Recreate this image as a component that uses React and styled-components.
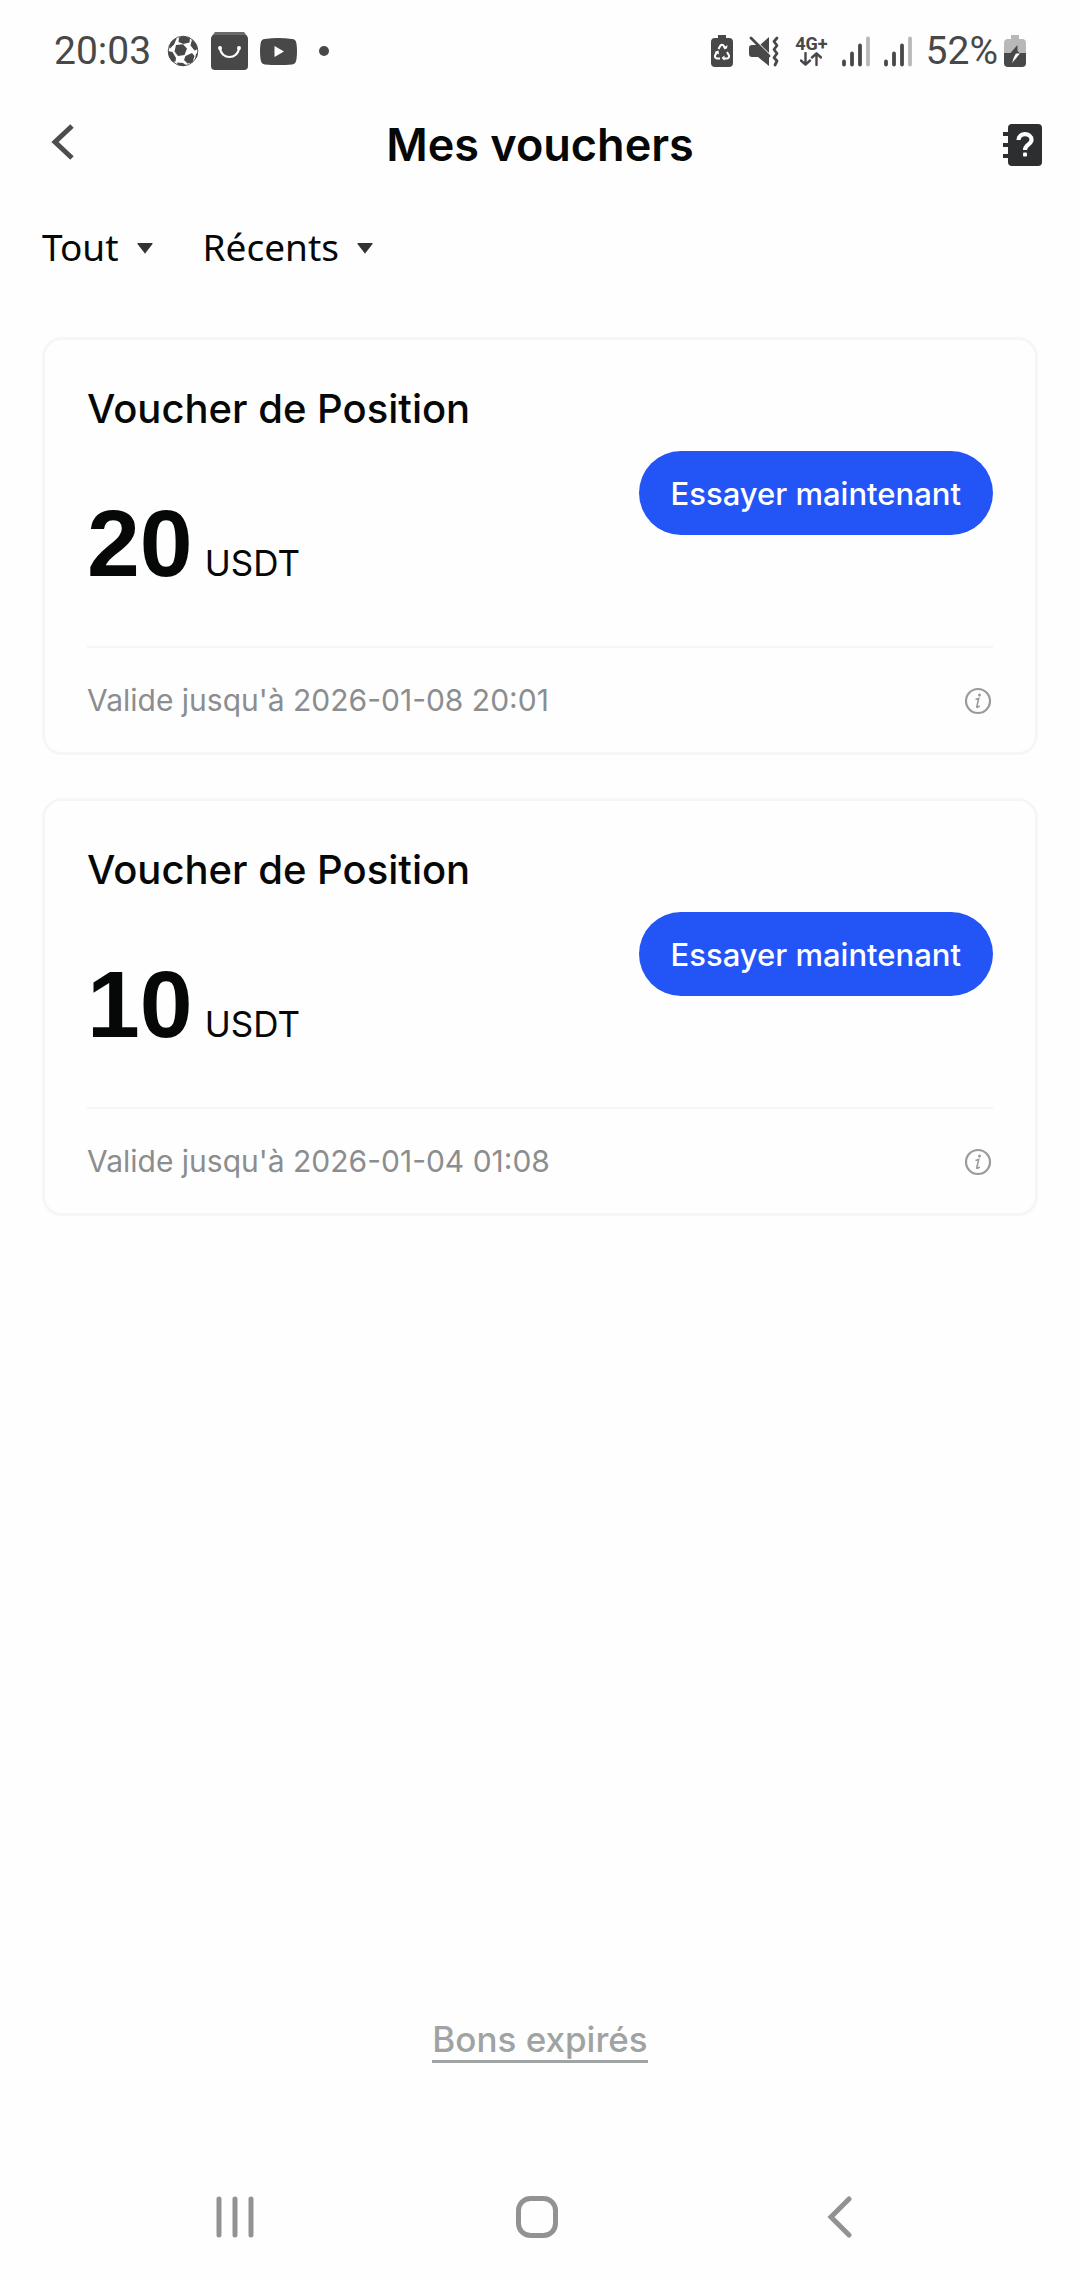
import React, { useState } from 'react'
import styled, { createGlobalStyle } from 'styled-components'

const GlobalStyle = createGlobalStyle`
  * {
    box-sizing: border-box;
  }

  body {
    margin: 0;
    background: #fefefe;
    color: #060807;
    font-family: Inter, "Liberation Sans", sans-serif;
  }

  button {
    margin: 0;
    padding: 0;
    border: none;
    background: none;
    font-family: inherit;
    cursor: pointer;
  }

  svg {
    display: block;
    flex: none;
  }
`

const Page = styled.div`
  display: flex;
  flex-direction: column;
  min-height: 100vh;
`

const StatusBar = styled.div`
  display: flex;
  justify-content: space-between;
  align-items: center;
  height: 102px;
  padding: 0 54px;
  color: #484848;
  font-family: Roboto, sans-serif;
  font-size: 39px;
`

const StatusGroup = styled.div`
  display: flex;
  align-items: center;
  gap: ${(props) => props.$gap}px;
`

const Network = styled.div`
  display: flex;
  flex-direction: column;
  align-items: center;
  font-size: 18px;
  line-height: 16px;
  font-weight: 700;
`

const Header = styled.header`
  display: grid;
  grid-template-columns: 1fr auto 1fr;
  align-items: center;
  height: 86px;
  padding: 0 38px;
`

const HeaderButton = styled.button`
  justify-self: ${(props) => props.$side};
`

const PageTitle = styled.h1`
  margin: 0;
  font-size: 45px;
  line-height: 60px;
  font-weight: 600;
`

const Filters = styled.div`
  display: flex;
  gap: 50px;
  height: 149px;
  padding: 30px 42px 0;
`

const FilterButton = styled.button`
  display: flex;
  align-items: center;
  gap: 18px;
  height: 56px;
  color: inherit;
  font-family: "Noto Sans", sans-serif;
  font-size: 37px;
`

const VoucherList = styled.ul`
  display: flex;
  flex-direction: column;
  gap: 43px;
  margin: 0;
  padding: 0 42px;
  list-style: none;
`

const VoucherCard = styled.li`
  padding: 0 42px;
  border: 3px solid #f6f6f6;
  border-radius: 20px;
`

const VoucherBody = styled.div`
  display: flex;
  justify-content: space-between;
  align-items: center;
  height: 308px;
  border-bottom: 2px solid #f5f5f5;
`

const VoucherName = styled.h2`
  margin: 0;
  font-size: 40px;
  line-height: 48px;
  font-weight: 500;
`

const Amount = styled.p`
  display: flex;
  align-items: baseline;
  gap: 12px;
  margin: 72px 0 0;
  font-size: 35px;
  line-height: 76px;
`

const AmountValue = styled.strong`
  font-family: "Liberation Sans", sans-serif;
  font-size: 95px;
`

const TryButton = styled.button`
  height: 84px;
  padding: 0 32px;
  border-radius: 42px;
  background: #2354f6;
  color: #fff;
  font-size: 31px;
  font-weight: 500;
`

const VoucherFooter = styled.div`
  display: flex;
  justify-content: space-between;
  align-items: center;
  height: 104px;
  color: #8b8d8e;
  font-size: 30px;
`

const Bottom = styled.footer`
  display: flex;
  flex-direction: column;
  align-items: center;
  margin-top: auto;
`

const ExpiredLink = styled.a`
  border-bottom: 3px solid #a0a3a3;
  color: #a0a3a3;
  font-size: 35px;
  line-height: 42px;
  font-weight: 500;
  text-decoration: none;
`

const NavBar = styled.nav`
  display: flex;
  justify-content: space-between;
  align-items: center;
  width: 100%;
  height: 126px;
  margin-top: 91px;
  padding: 0 222px 0 216px;
`

const IconSoccer = () => (
  <svg width="32" height="32" viewBox="0 0 32 32">
    <circle cx="16" cy="16" r="14.800" fill="#fefefe" stroke="#484848" strokeWidth=".9" />
    <g fill="#484848">
      <path d="M9 10l7-.8 4 4.300-2.500 6.500-6.500 1-3.500-4.500z" />
      <path d="M12 2.500l5-1.500 6 2-.5 4.500-6 1.500-5-2z" />
      <path d="M25 4.500l4 4 2 5.500-3.500 1.500-4-5z" />
      <path d="M18.500 21l6.500-3 2.500 3-2 6.500-5 1-3.500-3.500z" />
      <path d="M1 16l4.500 1 3.500 6-.5 3.500-3 .5C2.500 24 1 20 1 16z" />
      <path d="M2 12l2-5 5-4 .5 1-2.500 5.500-4 4z" />
      <path d="M10 27.500l6 .5 3.500 2.500Q15 32 10.500 29.800z" />
      <path d="M29 19l2-1q-.5 4-3 6.500z" />
    </g>
  </svg>
)

const IconBag = () => (
  <svg width="37" height="38" viewBox="0 0 37 38">
    <path d="M4 0h29l3 4H1z" fill="#6a6a6a" />
    <rect y="3" width="37" height="35" rx="4" fill="#484848" />
    <path d="M9 16c1 12 18 12 19 0" fill="none" stroke="#fff" strokeWidth="2.200" />
    <circle cx="9" cy="16" r="2" fill="#fff" />
    <circle cx="28" cy="16" r="2" fill="#fff" />
  </svg>
)

const IconYoutube = () => (
  <svg width="37" height="27" viewBox="0 0 37 27">
    <path d="M5 1Q18 -1 32 1Q36 1 36.500 6Q37.500 13 36.500 21Q36 26 32 26.500Q18 27.500 5 26.500Q1 26 .5 21Q-.5 13 .5 6Q1 1 5 1z" fill="#484848" />
    <path d="M14.500 8l9.500 5.500-9.500 5.500z" fill="#fff" />
  </svg>
)

const IconDot = () => (
  <svg width="30" height="10" viewBox="0 0 30 10">
    <circle cx="15" cy="5" r="5" fill="#484848" />
  </svg>
)

const IconPowerSaving = () => (
  <svg width="22" height="33" viewBox="0 0 22 33">
    <path d="M7 0h8v3h3q4 0 4 4v21q0 4-4 4H4q-4 0-4-4V7q0-4 4-4h3z" fill="#484848" />
    <g fill="none" stroke="#fff" strokeWidth="2" strokeLinejoin="round">
      <path d="M7.500 14l2-3.500q1.500-1.500 3 0l2 3.500" />
      <path d="M16 17l2 3.500q.5 2.500-2 3h-4" />
      <path d="M6 17l-2 3.500q-.5 2.500 2 3h3" />
    </g>
    <path d="M12 13l4 .5.500-3.500zM13.500 20.500v5l-3-2.500zM3.500 17l4-1.500.5 4z" fill="#fff" />
  </svg>
)

const IconMuteVibrate = () => (
  <svg width="30" height="31" viewBox="0 0 30 31">
    <path d="M0 12q0-3 3-3h5l12 12v9L9 21H3q-3 0-3-3zM20 1v16l-8.500-8.500z" fill="#484848" />
    <g fill="none" stroke="#484848" strokeWidth="2.800" strokeLinecap="round" strokeLinejoin="round">
      <path d="M2 2l18 18" />
      <path d="M28 2l-3 3.500 3 4-3 4 3 4-3 4 3 3.500-2 4" />
    </g>
  </svg>
)

const IconArrows = () => (
  <svg width="22" height="14" viewBox="0 0 22 14" fill="none" stroke="#484848" strokeWidth="2.400" strokeLinecap="round" strokeLinejoin="round">
    <path d="M5.500 1v11.500M1 8.500l4.500 4.200L10 8.500M16.500 13V1.500M12 5.500l4.500-4.200L21 5.500" />
  </svg>
)

const IconSignal = () => (
  <svg width="28" height="31" viewBox="0 0 28 31" strokeWidth="3.800" strokeLinecap="round">
    <path d="M2 25.500v3M10 17.500v11M18 9.500v19" stroke="#484848" />
    <path d="M26 2.500v26" stroke="#b8b8b8" />
  </svg>
)

const IconCharging = () => (
  <svg width="22" height="32" viewBox="0 0 22 32">
    <path d="M7 0h8v4h3q4 0 4 4v10H0V8q0-4 4-4h3z" fill="#b8b8b8" />
    <path d="M0 18h22v10q0 4-4 4H4q-4 0-4-4z" fill="#484848" />
    <path d="M13.500 10L5.500 19h6l2-1h2l-2-2z" fill="#484848" />
    <path d="M12 18.500h4L8 28l2-6z" fill="#fff" />
  </svg>
)

const IconBack = () => (
  <svg width="38" height="42" viewBox="0 0 38 42" fill="none" stroke="#4d4d4f" strokeWidth="5">
    <path d="M34 2L17 18l17 16" />
  </svg>
)

const IconHelp = () => (
  <svg width="39" height="42" viewBox="0 0 39 42">
    <path d="M0 8h8v4H0zM0 19h8v4H0zM0 30h8v4H0z" fill="#2d2e30" />
    <rect x="5" width="34" height="42" rx="4" fill="#2d2e30" />
    <path d="M15.500 16c0-8 13-7.500 13 0 0 4.500-6.500 4.500-6.500 10" fill="none" stroke="#fff" strokeWidth="4.200" />
    <rect x="20" y="28.500" width="4" height="4" rx="1" fill="#fff" />
  </svg>
)

const IconCaret = () => (
  <svg width="16" height="16" viewBox="0 0 16 16">
    <path d="M1 5h14q1 0 .5 1L8.500 15q-.5 1-1 0L.5 6Q0 5 1 5z" fill="#333" />
  </svg>
)

const IconInfo = () => (
  <svg width="30" height="30" viewBox="0 -1 30 30">
    <circle cx="15" cy="15" r="12" fill="none" stroke="#999b9b" strokeWidth="2.200" />
    <circle cx="16.500" cy="9" r="1.500" fill="#999b9b" />
    <path d="M12.500 13.500l3.200-1-2 8.500q0 1 3-1" fill="none" stroke="#999b9b" strokeWidth="1.600" />
  </svg>
)

const IconRecents = () => (
  <svg width="38" height="42" viewBox="0 0 38 42" stroke="#929292" strokeWidth="5" strokeLinecap="round">
    <path d="M3 3v36M19 3v36M35 3v36" />
  </svg>
)

const IconHome = () => (
  <svg width="42" height="42" viewBox="0 0 42 42">
    <rect x="2.500" y="2.500" width="37" height="37" rx="12" fill="none" stroke="#929292" strokeWidth="5" />
  </svg>
)

const IconNavBack = () => (
  <svg width="38" height="42" viewBox="0 0 38 42" fill="none" stroke="#929292" strokeWidth="5" strokeLinecap="round">
    <path d="M29 3L11 21l18 18" />
  </svg>
)

const vouchers = [
  { id: 1, name: 'Voucher de Position', amount: 20, currency: 'USDT', validUntil: '2026-01-08 20:01' },
  { id: 2, name: 'Voucher de Position', amount: 10, currency: 'USDT', validUntil: '2026-01-04 01:08' },
]

const Voucher = ({ voucher }) => (
  <VoucherCard>
    <VoucherBody>
      <div>
        <VoucherName>{voucher.name}</VoucherName>
        <Amount>
          <AmountValue>{voucher.amount}</AmountValue>
          {voucher.currency}
        </Amount>
      </div>
      <TryButton type="button">Essayer maintenant</TryButton>
    </VoucherBody>
    <VoucherFooter>
      <span>Valide jusqu'à {voucher.validUntil}</span>
      <button type="button" aria-label="Détails du voucher"><IconInfo /></button>
    </VoucherFooter>
  </VoucherCard>
)

const App = () => {
  const [openFilter, setOpenFilter] = useState(null)

  const toggleFilter = (name) => {
    setOpenFilter(openFilter === name ? null : name)
  }

  return (
    <Page>
      <GlobalStyle />
      <StatusBar>
        <StatusGroup $gap={16}>
          <span>20:03</span>
          <StatusGroup $gap={12}>
            <IconSoccer />
            <IconBag />
            <IconYoutube />
            <IconDot />
          </StatusGroup>
        </StatusGroup>
        <StatusGroup $gap={14}>
          <StatusGroup $gap={16}>
            <IconPowerSaving />
            <IconMuteVibrate />
            <Network>
              4G+
              <IconArrows />
            </Network>
          </StatusGroup>
          <IconSignal />
          <IconSignal />
          <StatusGroup $gap={6}>
            <span>52%</span>
            <IconCharging />
          </StatusGroup>
        </StatusGroup>
      </StatusBar>

      <Header>
        <HeaderButton type="button" $side="start" aria-label="Retour"><IconBack /></HeaderButton>
        <PageTitle>Mes vouchers</PageTitle>
        <HeaderButton type="button" $side="end" aria-label="Aide"><IconHelp /></HeaderButton>
      </Header>

      <Filters>
        {['Tout', 'Récents'].map((name) => (
          <FilterButton key={name} type="button" aria-expanded={openFilter === name} onClick={() => toggleFilter(name)}>
            {name}
            <IconCaret />
          </FilterButton>
        ))}
      </Filters>

      <VoucherList>
        {vouchers.map((voucher) => <Voucher key={voucher.id} voucher={voucher} />)}
      </VoucherList>

      <Bottom>
        <ExpiredLink href="#expires">Bons expirés</ExpiredLink>
        <NavBar>
          <button type="button" aria-label="Applications récentes"><IconRecents /></button>
          <button type="button" aria-label="Accueil"><IconHome /></button>
          <button type="button" aria-label="Précédent"><IconNavBack /></button>
        </NavBar>
      </Bottom>
    </Page>
  )
}

export default App
